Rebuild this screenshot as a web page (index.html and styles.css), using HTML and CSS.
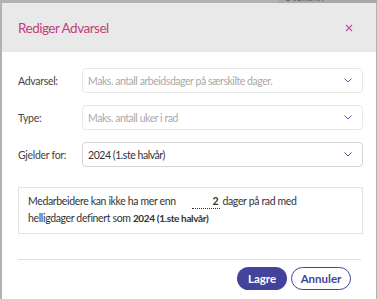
FILE: index.html
```html
<!DOCTYPE html>
<html lang="no">
<head>
  <meta charset="UTF-8" />
  <title>Rediger Advarsel</title>
  <link rel="stylesheet" href="styles.css">
</head>
<body>
  <div class="backdrop-select">Uteliakk</div>

  <div class="modal">
    <!-- HEADER -->
    <div class="modal-header">
      <h2>Rediger Advarsel</h2>
      <button class="close-btn" aria-label="Lukk">
        <svg width="8" height="8" viewBox="0 0 8 8"><path d="M1 1 L7 7 M7 1 L1 7" stroke="#b9529a" stroke-width="1.1" fill="none"/></svg>
      </button>
    </div>

    <!-- BODY -->
    <div class="modal-body">
      <div class="form-row">
        <label>Advarsel:</label>
        <div class="select placeholder">
          <span>Maks. antall arbeidsdager på særskilte dager.</span>
          <svg class="chevron" width="8" height="5" viewBox="0 0 8 5"><path d="M0.5 0.5 L4 4 L7.5 0.5" stroke="#5a4fb0" stroke-width="1" fill="none"/></svg>
        </div>
      </div>

      <div class="form-row">
        <label>Type:</label>
        <div class="select placeholder">
          <span>Maks. antall uker i rad</span>
          <svg class="chevron" width="8" height="5" viewBox="0 0 8 5"><path d="M0.5 0.5 L4 4 L7.5 0.5" stroke="#5a4fb0" stroke-width="1" fill="none"/></svg>
        </div>
      </div>

      <div class="form-row">
        <label>Gjelder for:</label>
        <div class="select selected">
          <span>2024 (1.ste halvår)</span>
          <svg class="chevron" width="8" height="5" viewBox="0 0 8 5"><path d="M0.5 0.5 L4 4 L7.5 0.5" stroke="#5a4fb0" stroke-width="1" fill="none"/></svg>
        </div>
      </div>

      <div class="info-box">
        Medarbeidere kan ikke ha mer enn <span class="inline-input">2</span> dager på rad med<br>
        helligdager definert som <b>2024 (1.ste halvår)</b>
      </div>

      <hr class="divider">

      <div class="actions">
        <button class="btn btn-primary">Lagre</button>
        <button class="btn btn-outline">Annuler</button>
      </div>
    </div>
  </div>
</body>
</html>
```
FILE: styles.css
```css
* {
  box-sizing: border-box;
}

body {
  margin: 0;
  padding: 3px 0 0 2px;
  background-color: #b2b2b2;
  font-family: 'Lato', sans-serif;
  color: #333;
  overflow: hidden;
  height: 299px;
  position: relative;
}

.backdrop-select {
  position: absolute;
  top: -9px;
  left: 278px;
  width: 99px;
  height: 12px;
  background-color: #a8a8a8;
  font-size: 11px;
  line-height: 12px;
  color: #666;
  padding-left: 6px;
}

/* ===== MODAL ===== */
.modal {
  width: 374px;
  height: 296px;
  background-color: white;
  position: relative;
}

.modal-header {
  height: 49px;
  background-color: #e9e9e9;
  display: flex;
  justify-content: space-between;
  align-items: center;
  padding: 0 23px 0 16px;
}

.modal-header h2 {
  margin: 0;
  font-size: 13.5px;
  font-weight: normal;
  letter-spacing: -0.5px;
  color: #c2407b;
}

.close-btn {
  background: none;
  border: none;
  padding: 0;
  display: flex;
  cursor: pointer;
}

.modal-body {
  padding: 16px 13px 0 16px;
}

/* ===== FORM ===== */
.form-row {
  display: flex;
  align-items: center;
  margin-bottom: 12px;
}

.form-row label {
  width: 64px;
  font-size: 10.5px;
  letter-spacing: -0.3px;
  color: #444;
}

.select {
  flex: 1;
  height: 25px;
  border: 1px solid #e8e8e8;
  border-radius: 4px;
  display: flex;
  align-items: center;
  justify-content: space-between;
  padding: 0 10px 0 5px;
  font-size: 10.5px;
  letter-spacing: -0.45px;
}

.select.placeholder {
  color: #a9a9a9;
}

.select.selected {
  border-color: #d4d4d4;
  color: #333;
}

/* ===== INFO BOX ===== */
.info-box {
  margin-top: 20px;
  border: 1px solid #e3e3e3;
  padding: 5px 9px 6px;
  font-size: 10.5px;
  letter-spacing: -0.35px;
  line-height: 17px;
  color: #333;
}

.info-box b {
  font-size: 10px;
}

.inline-input {
  display: inline-block;
  width: 28px;
  text-align: right;
  padding-right: 2px;
  font-weight: bold;
  line-height: 13px;
  border-bottom: 1px dotted #333;
  margin-left: 14px;
}

.divider {
  border: none;
  border-top: 1px solid #dedede;
  margin: 25px 2px 7px 0;
}

/* ===== BUTTONS ===== */
.actions {
  display: flex;
  justify-content: flex-end;
  gap: 4px;
  padding-right: 12px;
}

.btn {
  height: 23px;
  border-radius: 12px;
  font-family: 'Lato', sans-serif;
  font-size: 11.5px;
  font-weight: bold;
  padding: 0;
  cursor: pointer;
}

.btn-primary {
  width: 50px;
  background-color: #43439b;
  color: white;
  border: none;
}

.btn-outline {
  width: 60px;
  background-color: white;
  color: #43439b;
  border: 1.5px solid #43439b;
}
```
